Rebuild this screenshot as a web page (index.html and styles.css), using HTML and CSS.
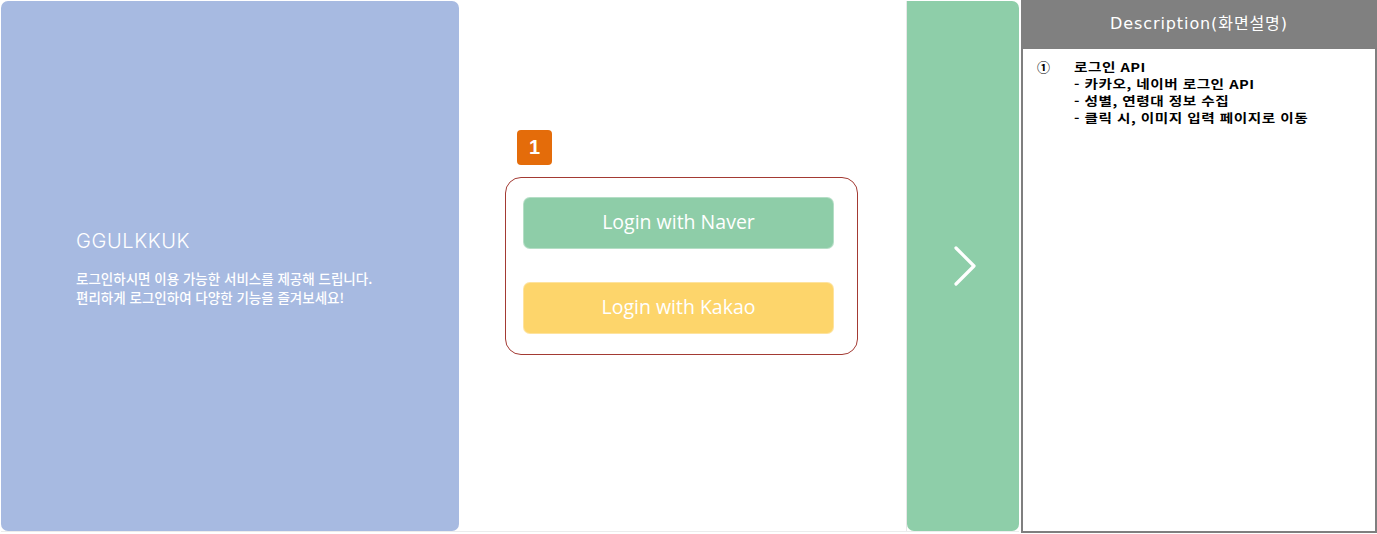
FILE: index.html
```html
<!DOCTYPE html>
<html lang="ko">
<head>
<meta charset="utf-8">
<link rel="stylesheet" href="styles.css">
</head>
<body>
<div class="page">
  <div class="screen">
    <section class="intro">
      <h1 class="brand">GGULKKUK</h1>
      <p class="intro-text">로그인하시면 이용 가능한 서비스를 제공해 드립니다.<br>편리하게 로그인하여 다양한 기능을 즐겨보세요!</p>
    </section>
    <section class="login">
      <div class="login-wrap">
        <div class="badge">1</div>
        <div class="login-box">
          <button class="btn btn-naver">Login with Naver</button>
          <button class="btn btn-kakao">Login with Kakao</button>
        </div>
      </div>
    </section>
    <section class="next">
      <svg class="chev" width="26" height="42" viewBox="0 0 26 42"><path d="M3 3 L21 21 L3 39" fill="none" stroke="#fff" stroke-width="3.2" stroke-linecap="round" stroke-linejoin="round"/></svg>
    </section>
  </div>
  <aside class="desc">
    <div class="desc-head">Description(화면설명)</div>
    <div class="desc-body">
      <div class="item">
        <span class="num">①</span>
        <div class="lines">
          <div class="line">로그인 API</div>
          <div class="line">- 카카오, 네이버 로그인 API</div>
          <div class="line">- 성별, 연령대 정보 수집</div>
          <div class="line">- 클릭 시, 이미지 입력 페이지로 이동</div>
        </div>
      </div>
    </div>
  </aside>
</div>
</body>
</html>
```
FILE: styles.css
```css
* { box-sizing: border-box; }
html, body { margin: 0; padding: 0; background: #fff; }
body { font-family: "Noto Sans", "Noto Sans CJK KR", sans-serif; }
.page { display: flex; width: 1377px; height: 534px; }
.screen { display: flex; margin: 1px 0 0 1px; height: 531px; border-bottom: 1px solid #ececec; }
.intro { width: 458px; height: 530px; background: #a7bae1; border-radius: 7px; padding: 227px 0 0 75px; color: #fff; }
.brand { margin: 0; font-family: "Inter", "Noto Sans", sans-serif; font-weight: 300; font-size: 20px; letter-spacing: 0.6px; line-height: 27px; }
.intro-text { margin: 14px 0 0; font-family: "Noto Sans CJK KR", sans-serif; font-size: 13.5px; font-weight: 500; line-height: 19px; letter-spacing: 0; }
.login { width: 448px; height: 530px; border-right: 1px solid #e8e8e8; padding: 129px 0 0 46px; }
.login-wrap { display: flex; flex-direction: column; }
.badge { width: 35px; height: 35px; margin-left: 12px; background: #e46c0a; border-radius: 4px; color: #fff; font-family: "Liberation Sans", sans-serif; font-weight: 700; font-size: 20px; line-height: 35px; text-align: center; }
.login-box { margin-top: 12px; width: 353px; height: 178px; border: 1px solid #a33a33; border-radius: 16px; padding: 19px 0 0 17px; display: flex; flex-direction: column; gap: 33px; }
.btn { width: 311px; height: 52px; border: 1px solid rgba(255,255,255,0.35); border-radius: 7px; color: #fff; font-family: "Open Sans", "Noto Sans", sans-serif; font-size: 19.5px; letter-spacing: 0; padding: 0 0 3px; }
.btn-naver { background: #8ecda8; }
.btn-kakao { background: #fdd56b; }
.next { width: 112px; height: 530px; background: #8ecea9; border-radius: 0 7px 7px 7px; display: flex; align-items: center; justify-content: center; padding: 0 0 0 6px; }
.desc { margin-left: 2px; width: 356px; height: 533px; display: flex; flex-direction: column; }
.desc-head { height: 48px; background: #808080; color: #fff; font-family: "DejaVu Sans", "Noto Sans CJK KR", sans-serif; font-size: 16px; text-align: center; line-height: 47px; letter-spacing: 0.9px; }
.desc-body { flex: 1; border: 2px solid #7f7f7f; border-top: 1px solid #7f7f7f; padding: 9px 0 0 14px; }
.item { display: flex; font-family: "Noto Sans CJK KR", sans-serif; font-weight: 700; color: #000; }
.num { width: 37px; font-size: 13px; line-height: 17px; }
.line { font-size: 12px; line-height: 17px; height: 17px; letter-spacing: 0.4px; transform: scaleX(1.22); transform-origin: left center; white-space: nowrap; }
```
